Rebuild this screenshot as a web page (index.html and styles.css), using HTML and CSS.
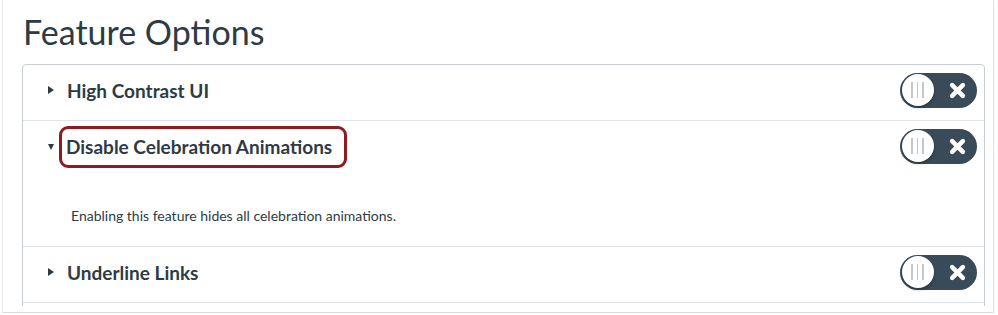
FILE: index.html
```html
<!DOCTYPE html>
<html>
<head>
<meta charset="utf-8">
<link rel="stylesheet" href="styles.css">
</head>
<body>
<div class="frame">
  <h1 class="page-title">Feature Options</h1>
  <div class="card-clip">
    <div class="card">
      <div class="row">
        <div class="row-head">
          <span class="caret caret-right"></span>
          <span class="row-title">High Contrast UI</span>
          <span class="toggle"><span class="knob"><i></i><i></i><i></i></span><svg class="x" viewBox="0 0 16 16"><path d="M3.5 3.5L12.5 12.5M12.5 3.5L3.5 12.5"/></svg></span>
        </div>
      </div>
      <div class="row">
        <div class="row-head">
          <span class="caret caret-down"></span>
          <span class="row-title highlighted">Disable Celebration Animations<span class="callout"></span></span>
          <span class="toggle"><span class="knob"><i></i><i></i><i></i></span><svg class="x" viewBox="0 0 16 16"><path d="M3.5 3.5L12.5 12.5M12.5 3.5L3.5 12.5"/></svg></span>
        </div>
        <p class="row-desc">Enabling this feature hides all celebration animations.</p>
      </div>
      <div class="row">
        <div class="row-head">
          <span class="caret caret-right"></span>
          <span class="row-title">Underline Links</span>
          <span class="toggle"><span class="knob"><i></i><i></i><i></i></span><svg class="x" viewBox="0 0 16 16"><path d="M3.5 3.5L12.5 12.5M12.5 3.5L3.5 12.5"/></svg></span>
        </div>
      </div>
      <div class="row">
        <div class="row-head"></div>
      </div>
    </div>
  </div>
</div>
</body>
</html>
```
FILE: styles.css
```css
html, body {
  margin: 0;
  padding: 0;
  background: #ffffff;
}
body {
  font-family: Lato, "Open Sans", sans-serif;
  color: #2d3b45;
}
.frame {
  margin-left: 2px;
  width: 990px;
  height: 312px;
  border-left: 1px solid #ececec;
  border-right: 1px solid #e6e6e6;
  border-bottom: 1px solid #dcdcdc;
  box-shadow: 0 1px 2px rgba(0,0,0,0.06);
  overflow: hidden;
}
.page-title {
  margin: 0 0 11px 20px;
  padding-top: 11px;
  font-size: 34px;
  line-height: 42px;
  font-weight: 400;
  color: #2d3b45;
}
.card-clip {
  margin-left: 19px;
  width: 963px;
  height: 242px;
  overflow: hidden;
}
.card {
  border: 1px solid #c7cdd1;
  border-radius: 4px;
}
.row {
  border-bottom: 1px solid #e2e5e7;
}
.row-head {
  display: flex;
  align-items: center;
  height: 55px;
  padding: 0 6px 5px 25px;
  box-sizing: border-box;
}
.caret {
  width: 0;
  height: 0;
  flex: none;
}
.caret-right {
  border-left: 6px solid #2d3b45;
  border-top: 4px solid transparent;
  border-bottom: 4px solid transparent;
  margin-right: 13px;
}
.caret-down {
  border-top: 6px solid #2d3b45;
  border-left: 3.5px solid transparent;
  border-right: 3.5px solid transparent;
  margin-right: 12px;
  margin-top: 1px;
}
.row-title {
  font-size: 19px;
  font-weight: 700;
  color: #2d3b45;
  flex: 1;
}
.highlighted {
  position: relative;
  flex: none;
  margin-right: auto;
}
.callout {
  position: absolute;
  left: -7px;
  right: -15px;
  top: -9px;
  bottom: -10px;
  border: 3px solid #8e1b20;
  border-radius: 9px;
}
.toggle {
  position: relative;
  flex: none;
  width: 77px;
  height: 35px;
  border-radius: 18px;
  background: #394b58;
  display: flex;
  align-items: center;
  justify-content: flex-end;
  padding-right: 10px;
  box-sizing: border-box;
  margin-right: 1px;
}
.knob {
  position: absolute;
  left: 1.5px;
  top: 1.5px;
  width: 32px;
  height: 32px;
  border-radius: 50%;
  background: #ffffff;
  box-shadow: 0 2px 3px rgba(0,0,0,0.25);
  display: flex;
  align-items: center;
  justify-content: center;
  gap: 4px;
}
.knob i {
  display: block;
  width: 1.5px;
  height: 16px;
  background: #c4c9cd;
}
.x {
  width: 19px;
  height: 19px;
  fill: none;
  stroke: #ffffff;
  stroke-width: 3.8;
  stroke-linecap: round;
}
.row-desc {
  margin: 0;
  padding: 30px 0 20px 48px;
  font-size: 14px;
  line-height: 20px;
  color: #2d3b45;
}
```
